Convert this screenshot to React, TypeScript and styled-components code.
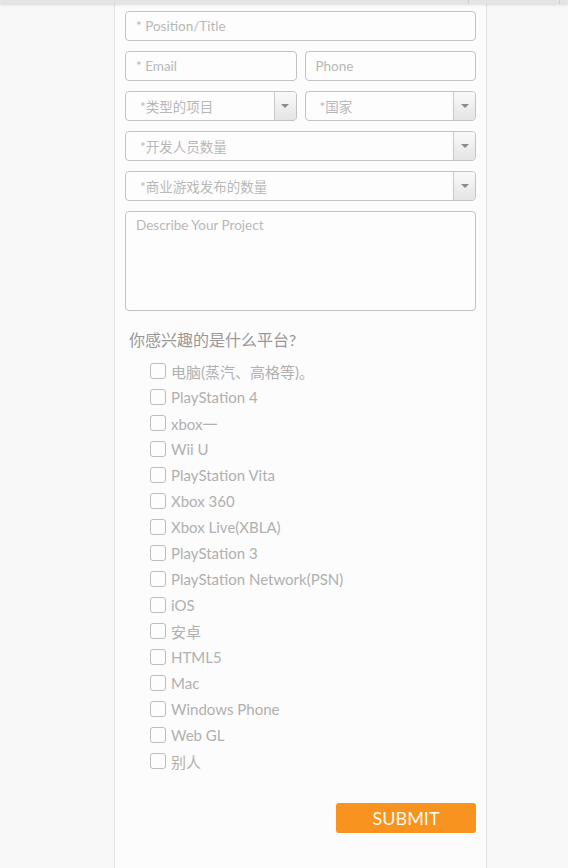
import { memo } from "react"
import styled, { createGlobalStyle } from "styled-components"

const GlobalStyle = createGlobalStyle`
  html, body {
    margin: 0;
    padding: 0;
    background: #f8f8f8;
    font-family: Lato, "Noto Sans CJK SC", sans-serif;
  }
`;

const TopStrip = styled.div`
  height: 4px;
  background: #e4e4e4;
  box-shadow: 0 1px 3px rgba(0, 0, 0, 0.12);
  display: flex;
  justify-content: flex-end;
  position: relative;
  z-index: 1;
`;

const StripCell = styled.div<{ $w: number }>`
  width: ${({ $w }) => $w}px;
  border-left: 1px solid #cfcfcf;
`;

const Page = styled.div`
  display: flex;
  padding-left: 114px;
`;

const Column = styled.div`
  width: 351px;
  min-height: 864px;
  background: #fcfcfc;
  border-left: 1px solid #e3e3e3;
  border-right: 1px solid #e3e3e3;
  padding: 7px 10px 0 10px;
  display: flex;
  flex-direction: column;
  gap: 10px;
`;

const Row = styled.div`
  display: flex;
  gap: 8px;
`;

const Field = styled.div`
  flex: 1;
  height: 28px;
  border: 1px solid #c2c2c2;
  border-radius: 4px;
  background: #fdfdfd;
  display: flex;
  align-items: center;
  overflow: hidden;
`;

const Placeholder = styled.span<{ $indent?: number }>`
  flex: 1;
  padding-left: ${({ $indent }) => $indent ?? 10}px;
  font-size: 13.5px;
  color: #b8b8b8;
`;

const ArrowBox = styled.div`
  width: 21px;
  height: 100%;
  border-left: 1px solid #c8c8c8;
  background: linear-gradient(#fafafa, #e4e4e4);
  display: flex;
  align-items: center;
  justify-content: center;
`;

const Triangle = styled.span`
  width: 0;
  height: 0;
  border-left: 4px solid transparent;
  border-right: 4px solid transparent;
  border-top: 4px solid #8a8a8a;
`;

const TextArea = styled.div`
  height: 100px;
  border: 1px solid #c2c2c2;
  border-radius: 4px;
  background: #fdfdfd;
  padding: 5px 10px;
  box-sizing: border-box;
  font-size: 13.5px;
  color: #b8b8b8;
`;

const Question = styled.div`
  margin-top: 6px;
  padding-left: 4px;
  font-size: 16px;
  color: #989898;
`;

const Options = styled.ul`
  list-style: none;
  margin: 2px 0 0 0;
  padding: 0 0 0 25px;
  display: flex;
  flex-direction: column;
  gap: 10px;
`;

const Option = styled.li`
  display: flex;
  align-items: center;
  gap: 5px;
  height: 16px;
  font-size: 15px;
  color: #b0b0b0;
`;

const Box = styled.span`
  width: 14px;
  height: 14px;
  border: 1px solid #bdbdbd;
  border-radius: 3px;
  background: #fdfdfd;
`;

const Footer = styled.div`
  display: flex;
  justify-content: flex-end;
  margin-top: 24px;
`;

const SubmitButton = styled.button`
  width: 140px;
  height: 30px;
  border: none;
  border-radius: 3px;
  background: #f7931e;
  color: #fffaf0;
  font-family: Lato, sans-serif;
  font-size: 18px;
  padding: 0;
`;

const platforms = [
  "电脑(蒸汽、高格等)。",
  "PlayStation 4",
  "xbox一",
  "Wii U",
  "PlayStation Vita",
  "Xbox 360",
  "Xbox Live(XBLA)",
  "PlayStation 3",
  "PlayStation Network(PSN)",
  "iOS",
  "安卓",
  "HTML5",
  "Mac",
  "Windows Phone",
  "Web GL",
  "别人",
];

function Select({ text, indent }: { text: string; indent?: number }) {
  return (
    <Field>
      <Placeholder $indent={indent}>{text}</Placeholder>
      <ArrowBox>
        <Triangle />
      </ArrowBox>
    </Field>
  );
}

function App() {
  return (
    <>
      <GlobalStyle />
      <TopStrip>
        <StripCell $w={90} />
        <StripCell $w={8} />
      </TopStrip>
      <Page>
        <Column>
          <Row>
            <Field><Placeholder>* Position/Title</Placeholder></Field>
          </Row>
          <Row>
            <Field><Placeholder>* Email</Placeholder></Field>
            <Field><Placeholder>Phone</Placeholder></Field>
          </Row>
          <Row>
            <Select text="*类型的项目" indent={14} />
            <Select text="*国家" indent={14} />
          </Row>
          <Row>
            <Select text="*开发人员数量" indent={14} />
          </Row>
          <Row>
            <Select text="*商业游戏发布的数量" indent={14} />
          </Row>
          <TextArea>Describe Your Project</TextArea>
          <Question>你感兴趣的是什么平台?</Question>
          <Options>
            {platforms.map((name) => (
              <Option key={name}>
                <Box />
                {name}
              </Option>
            ))}
          </Options>
          <Footer>
            <SubmitButton>SUBMIT</SubmitButton>
          </Footer>
        </Column>
      </Page>
    </>
  );
}

export default memo(App);
